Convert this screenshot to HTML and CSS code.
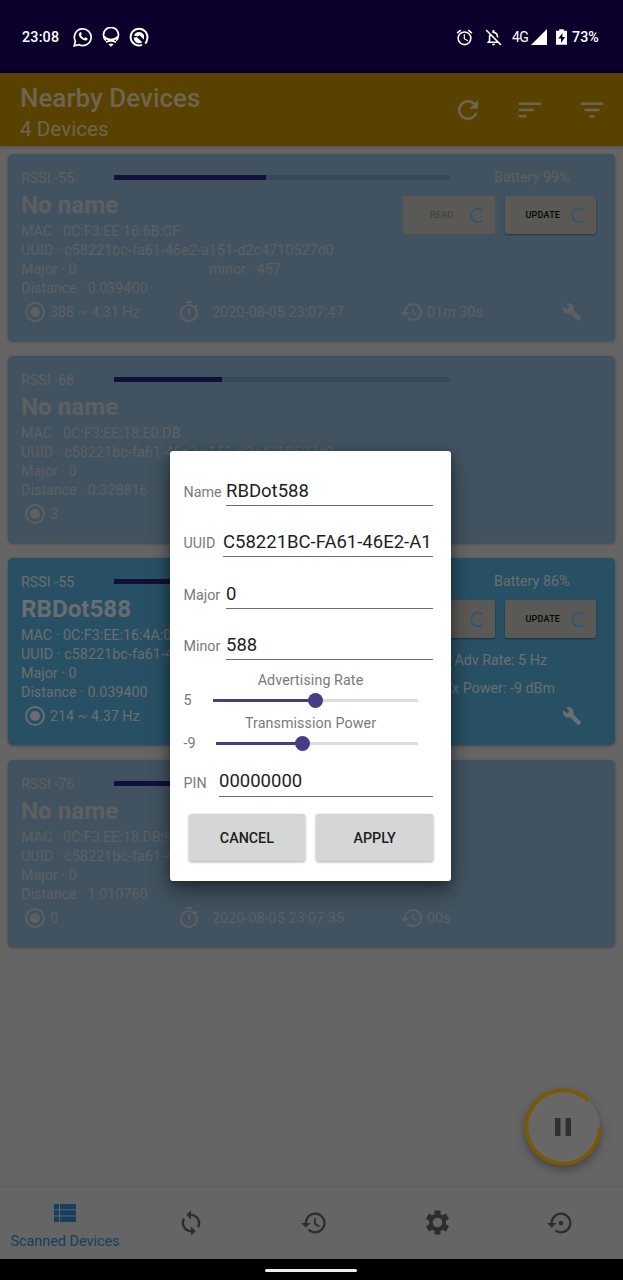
FILE: index.html
```html
<!DOCTYPE html>
<html lang="en">
<head>
<meta charset="utf-8">
<title>Nearby Devices</title>
<link rel="stylesheet" href="styles.css">
</head>
<body>
<svg class="defs" width="0" height="0">
  <symbol id="radio" viewBox="0 0 24 24"><path d="M12 7a5 5 0 1 0 0 10 5 5 0 0 0 0-10zm0-5a10 10 0 1 0 0 20 10 10 0 0 0 0-20zm0 18a8 8 0 1 1 0-16 8 8 0 0 1 0 16z"/></symbol>
  <symbol id="timer" viewBox="0 0 24 24"><path d="M15 1H9v2h6V1zm-4 13h2V8h-2v6zm8.030-6.610 1.420-1.420c-.43-.51-.9-.99-1.410-1.410l-1.420 1.420A8.960 8.960 0 0 0 12 4a9 9 0 1 0 7.030 3.390zM12 20a7 7 0 1 1 0-14 7 7 0 0 1 0 14z"/></symbol>
  <symbol id="history" viewBox="0 0 24 24"><path d="M13 3a9 9 0 0 0-9 9H1l3.890 3.890.07.14L9 12H6a7 7 0 1 1 2.060 4.940l-1.420 1.420A9 9 0 1 0 13 3zm-1 5v5l4.280 2.540.72-1.210-3.500-2.080V8H12z"/></symbol>
  <symbol id="wrench" viewBox="0 0 24 24"><path d="M22.700 19l-9.100-9.100c.9-2.300.4-5-1.500-6.900-2-2-5-2.400-7.400-1.300L9 6 6 9 1.600 4.700C.4 7.100.9 10.100 2.900 12.100c1.900 1.900 4.600 2.400 6.900 1.500l9.100 9.100c.4.4 1 .4 1.400 0l2.300-2.300c.5-.4.5-1.100.1-1.400z"/></symbol>
  <symbol id="spin" viewBox="0 0 16 16"><path d="M12.500 3.200A6.300 6.300 0 1 0 12.200 13" fill="none" stroke="currentColor" stroke-width="1.500"/></symbol>
</svg>
<div class="screen">
  <header class="status">
    <span class="clock">23:08</span>
    <svg class="s-icon s-wa" viewBox="0 0 20 20"><path d="M1.200 18.800l1.200-4.500A8.400 8.400 0 1 1 5.700 17.600z" fill="none" stroke="#fff" stroke-width="1.700"/><path d="M7 5.200c.5-.3.900-.1 1.100.4l.6 1.400c.1.300-.5 1-.7 1.300.7 1.400 1.900 2.500 3.300 3.100l1.100-1.100 2 1c.3.200 0 1.500-.5 1.900-2.800 1.800-8.900-3.300-8-6.400.2-.7.600-1.300 1.100-1.600z" fill="#fff"/></svg>
    <svg class="s-icon s-bulb" viewBox="0 0 20 20"><g fill="none" stroke="#fff" stroke-width="1.700"><path d="M5 13.500A7.500 7.500 0 1 1 15 13.500"/><path d="M2.800 9.500Q10 16 17.200 9.500M5 15.200q5-2.600 10 0"/></g><path d="M7.300 17.200q2.700-1.500 5.400 0L10 19.800z" fill="#fff"/></svg>
    <svg class="s-icon s-chrome" viewBox="0 0 20 20"><path d="M13 17.900A8.400 8.400 0 1 1 18.300 11.500Q18 14.500 16.300 16.600" fill="none" stroke="#fff" stroke-width="2"/><path d="M5 8.500A5.300 5.300 0 0 1 15 8.500v4.300L10.600 8.200 8.800 9.500z" fill="#fff"/><path d="M4.800 10.600L8 10.300l5.300 4.900A5.300 5.300 0 0 1 4.800 10.600z" fill="#fff"/></svg>
    <div class="s-right">
      <svg class="s-alarm" viewBox="0 0 24 24" fill="#fff"><path d="M22 5.720l-4.600-3.860-1.290 1.530 4.600 3.860L22 5.720zM7.880 3.390L6.600 1.860 2 5.710l1.290 1.530 4.590-3.850zM12.500 8H11v6l4.750 2.850.75-1.230-4-2.370V8zM12 4a9 9 0 1 0 0 18 9 9 0 0 0 0-18zm0 16a7 7 0 1 1 0-14 7 7 0 0 1 0 14z"/></svg>
      <svg class="s-bell" viewBox="0 0 24 24" fill="#fff"><path d="M12 22a2 2 0 0 0 2-2h-4c0 1.100.9 2 2 2zm4-5H8v-6c0-.9.240-1.730.650-2.440L7.190 7.100A7 7 0 0 0 6 11v5l-2 2v1h14.100l-2.100-2zM12 6.500c2.490 0 4 2.020 4 4.500v.1l2 2V11c0-3.070-1.630-5.640-4.500-6.320V4a1.500 1.500 0 0 0-3 0v.68c-.24.060-.47.150-.69.230l1.640 1.640c.18-.02.360-.05.550-.05zM3.410 1.860L2 3.270 19.730 21l.85 1 1.420-1.410z"/></svg>
      <span class="net">4G</span>
      <svg class="s-signal" viewBox="0 0 16 16"><path d="M0 16L16 0v16z" fill="#fff"/></svg>
      <svg class="s-batt" viewBox="0 0 12 18"><path d="M3.500 1.500V0h5v1.500H12V17H0V1.500z" fill="#fff"/><path d="M7 4L2.500 10h3v5L10 8.500H7z" fill="#0a002b"/></svg>
      <span class="pct">73%</span>
    </div>
  </header>

  <div class="appbar">
    <div class="titles"><h1>Nearby Devices</h1><p>4 Devices</p></div>
    <svg class="a-icon" viewBox="0 0 24 24"><path d="M17.650 6.350A8 8 0 1 0 19.730 14h-2.080A6 6 0 1 1 12 6c1.660 0 3.140.690 4.220 1.780L13 11h7V4l-2.350 2.350z"/></svg>
    <svg class="a-icon" viewBox="0 0 24 24"><path d="M3 18h6v-2H3v2zM3 6v2h18V6H3zm0 7h12v-2H3v2z"/></svg>
    <svg class="a-icon" viewBox="0 0 24 24"><path d="M10 18h4v-2h-4v2zM3 6v2h18V6H3zm3 7h12v-2H6v2z"/></svg>
  </div>

  <main class="list">
    <article class="card">
      <div class="top"><span>RSSI -55</span><div class="bar"><i style="width:45.2%"></i></div><span class="battery">Battery 99%</span></div>
      <div class="body">
        <div class="info">
          <h2>No name</h2>
          <p>MAC · 0C:F3:EE:16:6B:CF</p>
          <p class="uuid">UUID · c58221bc-fa61-46e2-a151-d2c4710527d0</p>
          <p class="split"><span>Major · 0</span><span>minor · 457</span></p>
          <p>Distance · 0.039400</p>
        </div>
        <div class="side">
          <div class="btns"><div class="btn off"><span>READ</span><svg><use href="#spin"/></svg></div><div class="btn"><span>UPDATE</span><svg><use href="#spin"/></svg></div></div>
        </div>
      </div>
      <div class="foot">
        <div class="cell"><svg><use href="#radio"/></svg><span>388 ~ 4.31 Hz</span></div>
        <div class="cell wide"><svg><use href="#timer"/></svg><span>2020-08-05 23:07:47</span></div>
        <div class="cell"><svg><use href="#history"/></svg><span>01m 30s</span></div>
        <svg class="wrench"><use href="#wrench"/></svg>
      </div>
    </article>

    <article class="card">
      <div class="top"><span>RSSI -68</span><div class="bar"><i style="width:32%"></i></div></div>
      <div class="body">
        <div class="info">
          <h2>No name</h2>
          <p>MAC · 0C:F3:EE:18:E0:DB</p>
          <p class="uuid">UUID · c58221bc-fa61-46e2-a151-d2c4710527d0</p>
          <p>Major · 0</p>
          <p>Distance · 0.328816</p>
        </div>
      </div>
      <div class="foot"><div class="cell"><svg><use href="#radio"/></svg><span>3</span></div></div>
    </article>

    <article class="card active">
      <div class="top"><span>RSSI -55</span><div class="bar"><i style="width:45.2%"></i></div><span class="battery">Battery 86%</span></div>
      <div class="body">
        <div class="info">
          <h2>RBDot588</h2>
          <p>MAC · 0C:F3:EE:16:4A:0</p>
          <p class="uuid">UUID · c58221bc-fa61-4</p>
          <p>Major · 0</p>
          <p>Distance · 0.039400</p>
        </div>
        <div class="side">
          <div class="btns"><div class="btn"><span>READ</span><svg><use href="#spin"/></svg></div><div class="btn"><span>UPDATE</span><svg><use href="#spin"/></svg></div></div>
          <p class="rate">Adv Rate: 5 Hz</p>
          <p class="power">Tx Power: -9 dBm</p>
        </div>
      </div>
      <div class="foot">
        <div class="cell"><svg><use href="#radio"/></svg><span>214 ~ 4.37 Hz</span></div>
        <svg class="wrench"><use href="#wrench"/></svg>
      </div>
    </article>

    <article class="card">
      <div class="top"><span>RSSI -76</span><div class="bar"><i style="width:24%"></i></div></div>
      <div class="body">
        <div class="info">
          <h2>No name</h2>
          <p>MAC · 0C:F3:EE:18:DB:9</p>
          <p class="uuid">UUID · c58221bc-fa61-4</p>
          <p>Major · 0</p>
          <p>Distance · 1.010760</p>
        </div>
      </div>
      <div class="foot">
        <div class="cell"><svg><use href="#radio"/></svg><span>0</span></div>
        <div class="cell wide"><svg><use href="#timer"/></svg><span>2020-08-05 23:07:35</span></div>
        <div class="cell"><svg><use href="#history"/></svg><span>00s</span></div>
      </div>
    </article>
  </main>

  <nav class="tabs">
    <div class="tab on"><svg viewBox="0 0 22 18"><path d="M0 0h5v5.300H0zM6 0h16v5.300H6zM0 6.300h5v5.300H0zM6 6.300h16v5.300H6zM0 12.600h5V18H0zM6 12.600h16V18H6z"/></svg><span>Scanned Devices</span></div>
    <div class="tab"><svg viewBox="0 0 24 24"><path d="M12 4V1L8 5l4 4V6a6 6 0 0 1 5.240 8.800l1.460 1.460A8 8 0 0 0 12 4zm0 14a6 6 0 0 1-5.240-8.800L5.300 7.740A8 8 0 0 0 12 20v3l4-4-4-4v3z"/></svg></div>
    <div class="tab"><svg><use href="#history"/></svg></div>
    <div class="tab"><svg class="gear" viewBox="0 0 24 24"><path fill-rule="evenodd" d="M9.500 2h5v3.100q1 .4 1.800 1L19 4.600l2.500 4.300-2.600 1.600q.2 1.500 0 3l2.600 1.600L19 19.400l-2.700-1.500q-.8.6-1.800 1V22h-5v-3.100q-1-.4-1.800-1L5 19.400l-2.500-4.300 2.600-1.600q-.2-1.500 0-3L2.500 8.900 5 4.600l2.700 1.500q.8-.6 1.800-1zM12 8a4 4 0 1 0 0 8 4 4 0 0 0 0-8z"/></svg></div>
    <div class="tab"><svg viewBox="0 0 24 24"><path d="M14 12a2 2 0 1 0-4 0 2 2 0 0 0 4 0zm-2-9a9 9 0 0 0-9 9H0l4 4 4-4H5a7 7 0 1 1 2.940 5.700l-1.420 1.440A9 9 0 1 0 12 3z"/></svg></div>
  </nav>
  <footer class="sysnav"><i></i></footer>

  <svg class="fab" viewBox="0 0 78 78"><circle cx="39" cy="39" r="37" fill="#676767"/><path d="M75.500 39.500A36.500 36.500 0 1 1 64.300 12.700" fill="none" stroke="#795a00" stroke-width="3.800"/><path d="M31 30h5.500v18H31zM41.500 30H47v18h-5.500z" fill="#303030"/></svg>

  <section class="dialog">
    <label class="field"><span class="f-name">Name</span><b>RBDot588</b></label>
    <label class="field"><span class="f-uuid">UUID</span><b>C58221BC-FA61-46E2-A1</b></label>
    <label class="field"><span class="f-name">Major</span><b>0</b></label>
    <label class="field"><span class="f-name">Minor</span><b>588</b></label>
    <p class="caption">Advertising Rate</p>
    <div class="slider"><span class="v-adv">5</span><div class="track"><i style="width:50%"></i></div></div>
    <p class="caption second">Transmission Power</p>
    <div class="slider"><span class="v-tx">-9</span><div class="track"><i style="width:42.800%"></i></div></div>
    <label class="field pin"><span class="f-pin">PIN</span><b>00000000</b></label>
    <div class="actions"><button>CANCEL</button><button>APPLY</button></div>
  </section>
</div>
</body>
</html>
```
FILE: styles.css
```css
* { box-sizing: border-box; margin: 0; padding: 0; }
body { width: 623px; height: 1280px; overflow: hidden; background: #656565; font-family: Roboto, "Liberation Sans", sans-serif; }
svg { display: block; flex: none; fill: currentColor; }
.defs { position: absolute; }
.screen { position: relative; display: flex; flex-direction: column; width: 623px; height: 1280px; }

.status { display: flex; align-items: center; height: 73px; padding: 1px 23px 0 22px; background: #0a002b; color: #fff; font-size: 14.300px; font-weight: 500; }
.clock { width: 51px; letter-spacing: .2px; }
.s-icon { width: 20px; height: 20px; }
.s-bulb { margin-left: 8px; }
.s-chrome { margin-left: 8px; }
.s-right { display: flex; align-items: center; margin-left: auto; }
.s-alarm { width: 19px; height: 19px; margin-right: 10px; }
.s-bell { width: 19px; height: 19px; margin-right: 9px; }
.net { font-weight: 400; font-size: 14px; letter-spacing: -.5px; width: 19px; }
.s-signal { width: 16px; height: 16px; margin-right: 9px; }
.s-batt { width: 11px; height: 17px; margin-right: 5px; }
.pct { width: 28px; }

.appbar { display: flex; align-items: center; height: 73px; padding: 0 16px 0 20px; background: #594200; color: #6d6550; box-shadow: 0 1px 4px rgba(0,0,0,.18); z-index: 1; }
.titles { flex: 1; }
.titles h1 { font-size: 26px; line-height: 31px; font-weight: 500; margin-top: 8px; }
.titles p { font-size: 20.700px; line-height: 31px; font-weight: 400; }
.a-icon { width: 30px; height: 30px; margin-left: 32px; }

.list { flex: 1; display: flex; flex-direction: column; gap: 15.500px; padding: 8px 8px 0; }
.card { height: 186.500px; border-radius: 5px; padding: 14px 13px 0; background: #415360; color: #5e5f60; font-size: 14.300px; box-shadow: 0 1px 3px rgba(0,0,0,.3); white-space: nowrap; }
.card.active { background: #285064; color: #6b6e70; }
.top { display: grid; grid-template-columns: 93px 336px 1fr; align-items: center; height: 19px; }
.top .bar { margin-top: -1px; }
.bar { height: 5px; background: #38475a; }
.bar i { display: block; height: 5px; background: #10103a; }
.battery { padding-left: 44px; margin-top: -2px; }
.body { display: flex; height: 112px; }
.info { width: 382px; padding-top: 3px; }
.info h2 { font-size: 24.200px; line-height: 30px; font-weight: 700; margin-bottom: 1.500px; }
.info p { line-height: 19px; }
.info .uuid { letter-spacing: .07px; }
.split { display: flex; }
.split span { width: 188px; }
.btns { display: flex; gap: 10px; padding-top: 9px; }
.btn { display: flex; align-items: center; width: 91.500px; height: 38px; padding: 0 9px 0 21px; border-radius: 2px; background: #5b5956; color: #050505; font-size: 9px; font-weight: 500; letter-spacing: .2px; box-shadow: 0 1px 2px rgba(0,0,0,.4); }
.btn span { flex: 1; }
.btn svg { width: 17px; height: 17px; color: #285874; }
.btn.off { color: #434343; box-shadow: none; }
.btn:first-child { padding-left: 27px; }
.active .btn:first-child { padding-left: 22px; }
.rate { text-align: right; width: 144px; margin-top: 13px; line-height: 19px; }
.power { text-align: right; width: 152px; margin-top: 9px; line-height: 19px; }
.foot { display: flex; align-items: center; height: 26px; padding-left: 2px; }
.cell { display: flex; align-items: center; gap: 3px; width: 154px; }
.cell.wide { width: 223px; gap: 11px; letter-spacing: .06px; }
.cell svg { width: 24px; height: 24px; }
.wrench { width: 20px; height: 20px; margin: 0 20px 0 auto; }

.tabs { display: flex; height: 73px; border-top: 1px solid #5e5e5e; background: #656565; color: #2d2d2d; }
.tab { flex: none; width: 123.200px; display: flex; flex-direction: column; align-items: center; justify-content: center; padding: 0 0 1px 1px; }
.tab svg { width: 28px; height: 28px; }
.tab .gear { width: 29px; height: 29px; }
.tab.on { width: 129px; color: #163e61; font-size: 14.400px; gap: 11px; padding-top: 8px; }
.tab.on svg { width: 22px; height: 18px; }
.sysnav { display: flex; justify-content: center; height: 21px; background: #000; }
.sysnav i { width: 92px; height: 3px; margin: 10px 2px 0 0; border-radius: 2px; background: #eee; }

.fab { position: absolute; left: 524px; top: 1088px; width: 78px; height: 78px; border-radius: 50%; filter: drop-shadow(0 4px 5px rgba(0,0,0,.35)); }

.dialog { position: absolute; left: 170px; top: 451px; width: 281px; height: 430px; padding: 3px 18px 0 13.500px; border-radius: 3px; background: #fff; color: #7a7a7a; font-size: 14.300px; box-shadow: 0 10px 22px rgba(0,0,0,.42), 0 2px 8px rgba(0,0,0,.25); z-index: 2; }
.field { display: flex; align-items: flex-end; height: 51.500px; }
.field span { line-height: 28px; }
.field b { flex: 1; min-width: 0; height: 31px; line-height: 32px; border-bottom: 1px solid #6d6d6d; padding-left: .5px; color: #1e1e1e; font-size: 18.500px; font-weight: 400; white-space: nowrap; }
.f-name { width: 42px; }
.f-uuid { width: 39px; }
.f-pin { width: 35px; }
.caption { margin: 11px 0 1px; width: 254px; height: 18px; line-height: 18px; text-align: center; letter-spacing: .08px; }
.second { margin-top: 3px; }
.slider { display: flex; align-items: center; height: 21px; }
.slider span { margin-top: -2px; }
.v-adv { width: 29px; }
.v-tx { width: 32.500px; }
.track { flex: 1; height: 3px; margin: 0 15px 0 0; background: #dcdcdc; }
.track i { display: block; height: 3px; background: #493b86; position: relative; }
.track i::after { content: ""; position: absolute; right: -7.500px; top: -6px; width: 15px; height: 15px; border-radius: 50%; background: #493b86; }
.pin { height: 42.500px; }
.pin b { line-height: 31px; }
.actions { display: flex; gap: 11px; padding: 17.500px 0 0 5px; }
.actions button { flex: 1; height: 47px; border: 0; border-radius: 2px; background: #d5d7d6; color: #1c1c1c; font: 500 14.300px Roboto, "Liberation Sans", sans-serif; box-shadow: 0 1px 3px rgba(0,0,0,.35); }
```
